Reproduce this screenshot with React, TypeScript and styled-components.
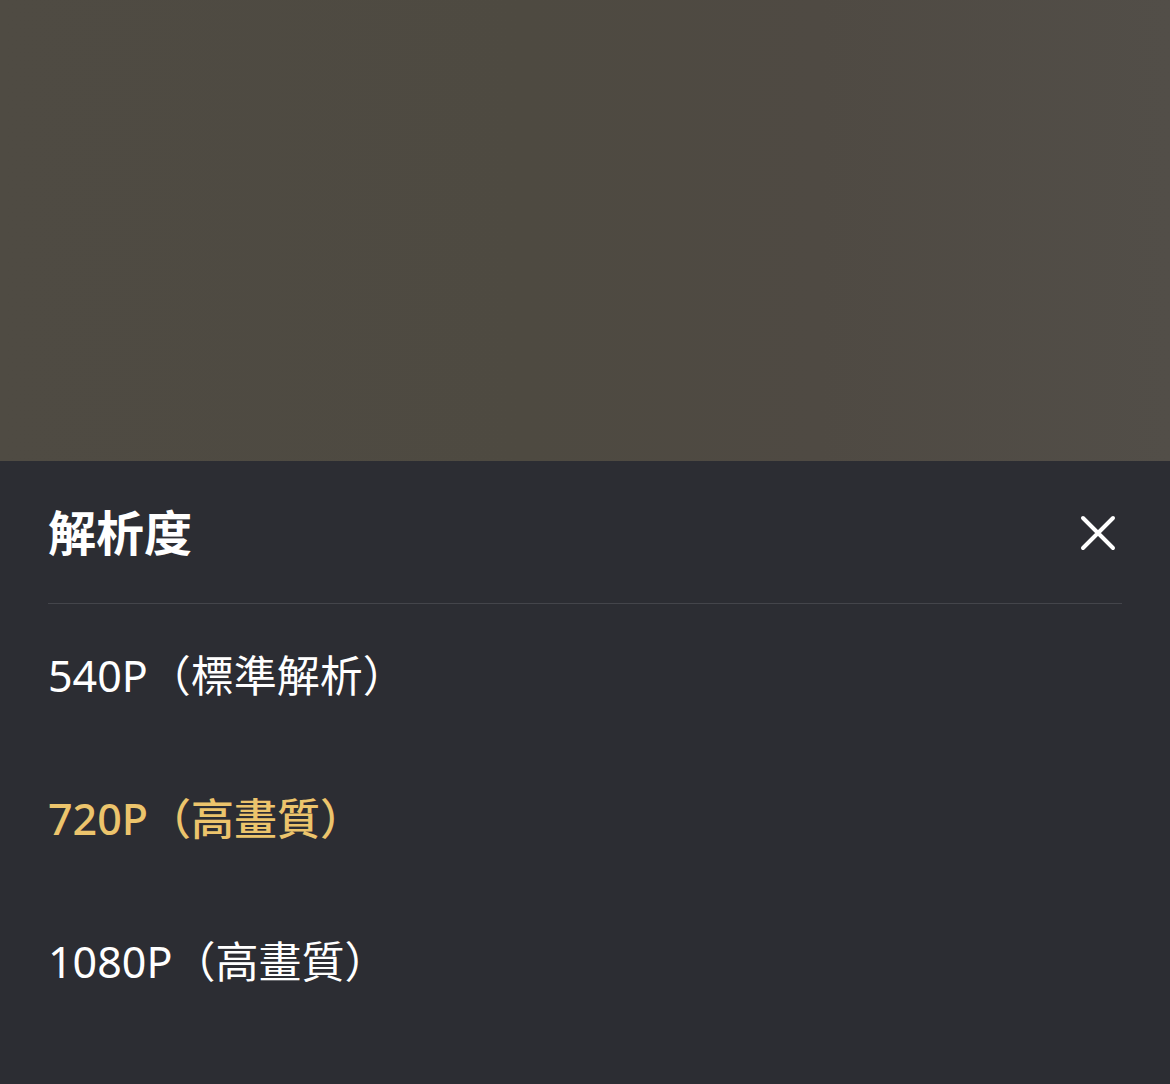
import React from "react";
import styled, { createGlobalStyle } from "styled-components";

const GlobalStyle = createGlobalStyle`
  html, body {
    margin: 0;
    padding: 0;
    background: #2c2d33;
  }
  body {
    font-family: "Noto Sans", "Noto Sans CJK TC", sans-serif;
    -webkit-font-smoothing: antialiased;
  }
`;

const Page = styled.div`
  width: 1170px;
  height: 1084px;
  display: flex;
  flex-direction: column;
  overflow: hidden;
`;

const Backdrop = styled.div`
  height: 461px;
  flex-shrink: 0;
  background: linear-gradient(
    90deg,
    #4f4b43 0%,
    #4e4a41 45%,
    #4f4a43 70%,
    #524e48 100%
  );
`;

const Sheet = styled.section`
  flex: 1;
  background: #2c2d33;
  padding: 0 48px;
  display: flex;
  flex-direction: column;
`;

const Header = styled.div`
  height: 143px;
  display: flex;
  align-items: center;
  justify-content: space-between;
  border-bottom: 1px solid #44454b;
  padding-top: 1px;
  box-sizing: border-box;
`;

const Title = styled.h2`
  margin: -6px 0 0;
  font-family: "Noto Sans CJK TC", "Noto Sans", sans-serif;
  font-size: 48px;
  font-weight: 700;
  color: #ffffff;
  line-height: 1;
`;

const CloseButton = styled.button`
  width: 40px;
  height: 40px;
  margin-right: 4px;
  padding: 0;
  border: none;
  background: transparent;
  display: flex;
  align-items: center;
  justify-content: center;
  cursor: pointer;
`;

const List = styled.ul`
  list-style: none;
  margin: 0;
  padding: 0;
`;

const Option = styled.li<{ $active?: boolean }>`
  height: 143px;
  display: flex;
  align-items: center;
  font-family: "Noto Sans", "Noto Sans CJK TC", sans-serif;
  font-size: 43px;
  font-weight: ${(p) => (p.$active ? 500 : 400)};
  color: ${(p) => (p.$active ? "#ecc46c" : "#ffffff")};
  line-height: 1;
`;

const options = [
  { label: "540P（標準解析）", active: false },
  { label: "720P（高畫質）", active: true },
  { label: "1080P（高畫質）", active: false },
];

export default function App() {
  return (
    <Page>
      <GlobalStyle />
      <Backdrop />
      <Sheet>
        <Header>
          <Title>解析度</Title>
          <CloseButton aria-label="close">
            <svg width="36" height="36" viewBox="0 0 36 36">
              <path
                d="M3 3 L33 33 M33 3 L3 33"
                stroke="#ffffff"
                strokeWidth="4"
                strokeLinecap="round"
              />
            </svg>
          </CloseButton>
        </Header>
        <List>
          {options.map((o) => (
            <Option key={o.label} $active={o.active}>
              {o.label}
            </Option>
          ))}
        </List>
      </Sheet>
    </Page>
  );
}
